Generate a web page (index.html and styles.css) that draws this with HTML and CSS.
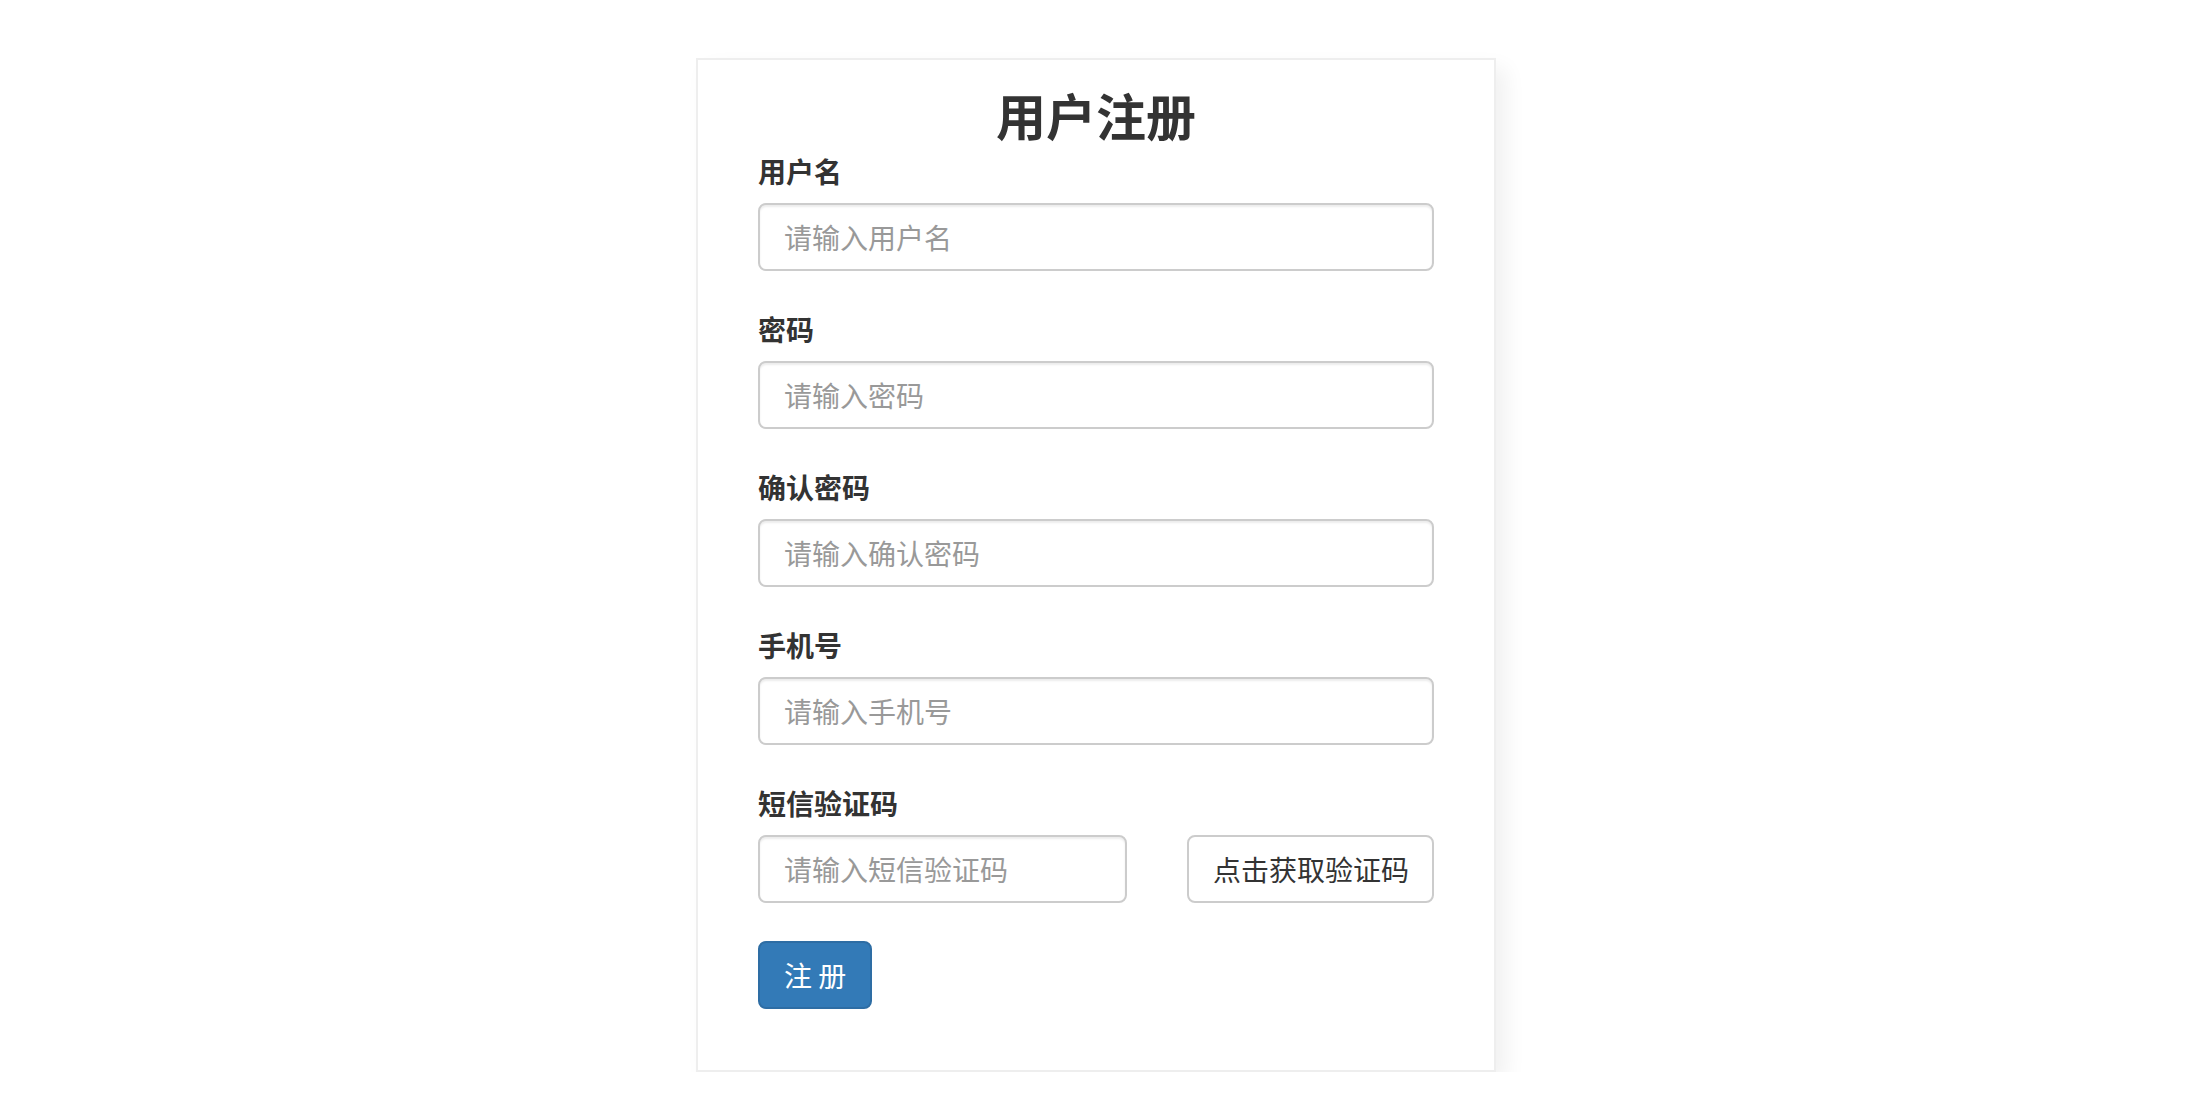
FILE: index.html
```html
<!DOCTYPE html>
<html lang="zh-CN">
<head>
<meta charset="utf-8">
<title>用户注册</title>
<link rel="stylesheet" href="styles.css">
</head>
<body>
<div class="card">
  <h3 class="title">用户注册</h3>
  <form class="form">
    <div class="form-group">
      <label class="label">用户名</label>
      <input class="input" type="text" placeholder="请输入用户名">
    </div>
    <div class="form-group">
      <label class="label">密码</label>
      <input class="input" type="password" placeholder="请输入密码">
    </div>
    <div class="form-group">
      <label class="label">确认密码</label>
      <input class="input" type="password" placeholder="请输入确认密码">
    </div>
    <div class="form-group">
      <label class="label">手机号</label>
      <input class="input" type="text" placeholder="请输入手机号">
    </div>
    <div class="form-group">
      <label class="label">短信验证码</label>
      <div class="sms-row">
        <input class="input" type="text" placeholder="请输入短信验证码">
        <button class="btn btn-default" type="button">点击获取验证码</button>
      </div>
    </div>
    <div class="actions">
      <button class="btn btn-primary" type="button">注 册</button>
    </div>
  </form>
</div>
</body>
</html>
```

FILE: styles.css
```css
* { box-sizing: border-box; }
html, body {
  margin: 0;
  padding: 0;
  background: #fff;
}
body {
  font-family: "Noto Sans CJK SC", "Noto Sans", sans-serif;
  color: #333;
  font-size: 28px;
  line-height: 40px;
  padding-top: 58px;
}
.card {
  width: 800px;
  margin: 0 auto;
  border: 2px solid #eee;
  background: #fff;
  padding: 27px 60px 61px;
  box-shadow: 10px 10px 20px rgba(0, 0, 0, 0.06);
}
.title {
  margin: 0 0 9px;
  text-align: center;
  font-size: 50px;
  line-height: 55px;
  font-weight: 700;
  color: #333;
}
.form { margin: 0; }
.form-group {
  margin-bottom: 38px;
}
.form-group.sms { margin-bottom: 40px; }
.label {
  display: block;
  font-weight: 700;
  font-size: 28px;
  line-height: 40px;
  margin-bottom: 12px;
  color: #333;
}
.input {
  display: block;
  width: 100%;
  height: 68px;
  padding: 12px 24px;
  font-family: inherit;
  font-size: 28px;
  line-height: 40px;
  color: #555;
  background: #fff;
  border: 2px solid #ccc;
  border-radius: 8px;
  box-shadow: inset 0 2px 2px rgba(0, 0, 0, 0.075);
  outline: none;
}
.input::placeholder { color: #999; }
.sms-row {
  display: grid;
  grid-template-columns: 369px 247px;
  justify-content: space-between;
}
.btn {
  display: inline-block;
  height: 68px;
  padding: 12px 24px;
  font-family: inherit;
  font-size: 28px;
  line-height: 40px;
  border-radius: 8px;
  border: 2px solid #ccc;
  cursor: pointer;
  white-space: nowrap;
}
.btn-default {
  background: #fff;
  color: #333;
  width: 100%;
  text-align: center;
}
.btn-primary {
  background: #337ab7;
  border-color: #2e6da4;
  color: #fff;
}
.actions { margin-top: 4px; }
```
